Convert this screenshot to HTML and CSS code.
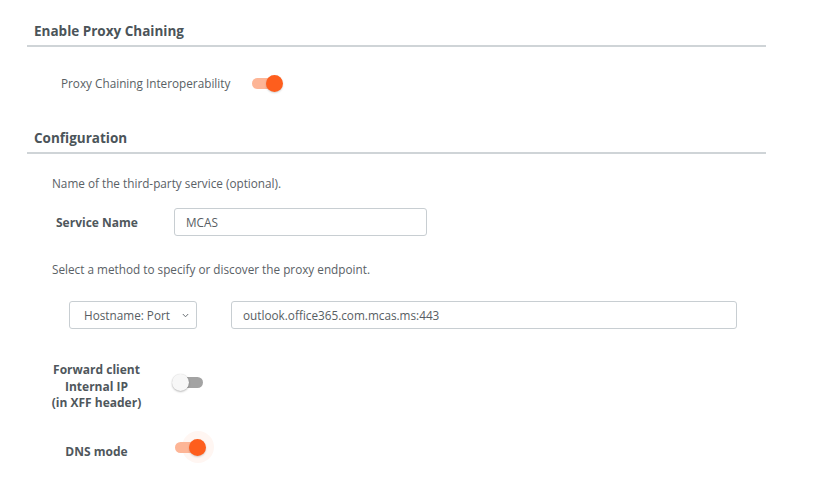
FILE: index.html
```html
<!DOCTYPE html>
<html lang="en">
<head>
<meta charset="utf-8">
<title>Proxy Chaining</title>
<link rel="stylesheet" href="styles.css">
</head>
<body>
<div class="page">
  <section class="section">
    <h2 class="section-title">Enable Proxy Chaining</h2>
    <div class="toggle-row">
      <span class="plain-label">Proxy Chaining Interoperability</span>
      <span class="switch on"><span class="track"></span><span class="thumb"></span></span>
    </div>
  </section>

  <section class="section config">
    <h2 class="section-title">Configuration</h2>
    <p class="note">Name of the third-party service (optional).</p>
    <div class="field-row">
      <label class="field-label">Service Name</label>
      <div class="input service">MCAS</div>
    </div>
    <p class="note second">Select a method to specify or discover the proxy endpoint.</p>
    <div class="endpoint-row">
      <div class="select">
        <span>Hostname: Port</span>
        <svg class="chev" width="7" height="5" viewBox="0 0 7 5"><path d="M0.8 1 L3.5 3.8 L6.2 1" fill="none" stroke="#6a7075" stroke-width="1"/></svg>
      </div>
      <div class="input endpoint">outlook.office365.com.mcas.ms:443</div>
    </div>
    <div class="switch-row forward">
      <div class="center-label">Forward client<br>Internal IP<br>(in XFF header)</div>
      <span class="switch off"><span class="track"></span><span class="thumb"></span></span>
    </div>
    <div class="switch-row dns">
      <div class="center-label">DNS mode</div>
      <span class="switch on halo"><span class="ripple"></span><span class="track"></span><span class="thumb"></span></span>
    </div>
  </section>
</div>
</body>
</html>
```

FILE: styles.css
```css
* { box-sizing: border-box; }
html, body {
  margin: 0;
  padding: 0;
  background: #ffffff;
}
body {
  font-family: "Open Sans", "Liberation Sans", sans-serif;
  font-size: 11.75px;
  color: #5a6166;
}
.page {
  width: 739px;
  margin-left: 27px;
  padding-top: 21px;
}
.section-title {
  margin: 0;
  padding: 0 0 4px 7px;
  font-size: 13.5px;
  line-height: 20px;
  font-weight: 700;
  color: #4b5459;
  border-bottom: 2px solid #cfd4d7;
}
.config { margin-top: 36px; }

.toggle-row {
  display: flex;
  align-items: center;
  margin-top: 27px;
  padding-left: 34px;
  height: 18px;
}
.plain-label {
  width: 188px;
  line-height: 18px;
  color: #595f64;
}

/* switch */
.switch {
  position: relative;
  display: inline-block;
  width: 34px;
  height: 17px;
  flex: none;
}
.switch .track {
  position: absolute;
  left: 3px;
  top: 3px;
  width: 28px;
  height: 11px;
  border-radius: 6px;
  background: #a3a3a3;
}
.switch .thumb {
  position: absolute;
  left: 0;
  top: 0;
  width: 17px;
  height: 17px;
  border-radius: 50%;
  background: #f7f7f7;
  box-shadow: 0 1px 2px rgba(0,0,0,0.25), 0 0 1px rgba(0,0,0,0.15);
}
.switch.on .track { background: #fdb596; }
.switch.on .thumb {
  left: 17px;
  background: #fe5e1d;
  box-shadow: 0 1px 2px rgba(0,0,0,0.18);
}
.switch .ripple {
  position: absolute;
  left: 9.5px;
  top: -7.5px;
  width: 32px;
  height: 32px;
  border-radius: 50%;
  background: rgba(255, 94, 29, 0.06);
}

.note {
  margin: 20px 0 0;
  padding-left: 25px;
  line-height: 18px;
  color: #5a6166;
}
.note.second { margin-top: 24px; }

.field-row {
  display: flex;
  align-items: center;
  margin-top: 16px;
  padding-left: 29px;
}
.field-label {
  width: 118px;
  font-size: 12px;
  font-weight: 700;
  color: #4f575c;
}
.input {
  height: 28px;
  border: 1px solid #c8ced2;
  border-radius: 3px;
  padding: 0 11px;
  line-height: 26px;
  color: #585e63;
  background: #fff;
}
.service { width: 253px; }

.endpoint-row {
  display: flex;
  align-items: center;
  margin-top: 23px;
  padding-left: 42px;
  gap: 34px;
}
.select {
  width: 128px;
  height: 28px;
  border: 1px solid #c8ced2;
  border-radius: 3px;
  display: flex;
  align-items: center;
  justify-content: space-between;
  padding: 0 7px 0 14px;
  color: #585e63;
}
.chev { display: block; margin-top: 1px; }
.endpoint { width: 506px; }

.switch-row {
  display: flex;
  align-items: center;
  padding-left: 13px;
}
.switch-row.forward { margin-top: 33px; }
.switch-row.dns { margin-top: 27px; }
.center-label {
  width: 113px;
  text-align: center;
  font-size: 12px;
  font-weight: 700;
  line-height: 16.5px;
  color: #4f575c;
}
.switch-row .switch {
  margin-left: 19px;
  margin-bottom: 8px;
}
.switch-row.dns .switch { margin-bottom: 10px; }
```
